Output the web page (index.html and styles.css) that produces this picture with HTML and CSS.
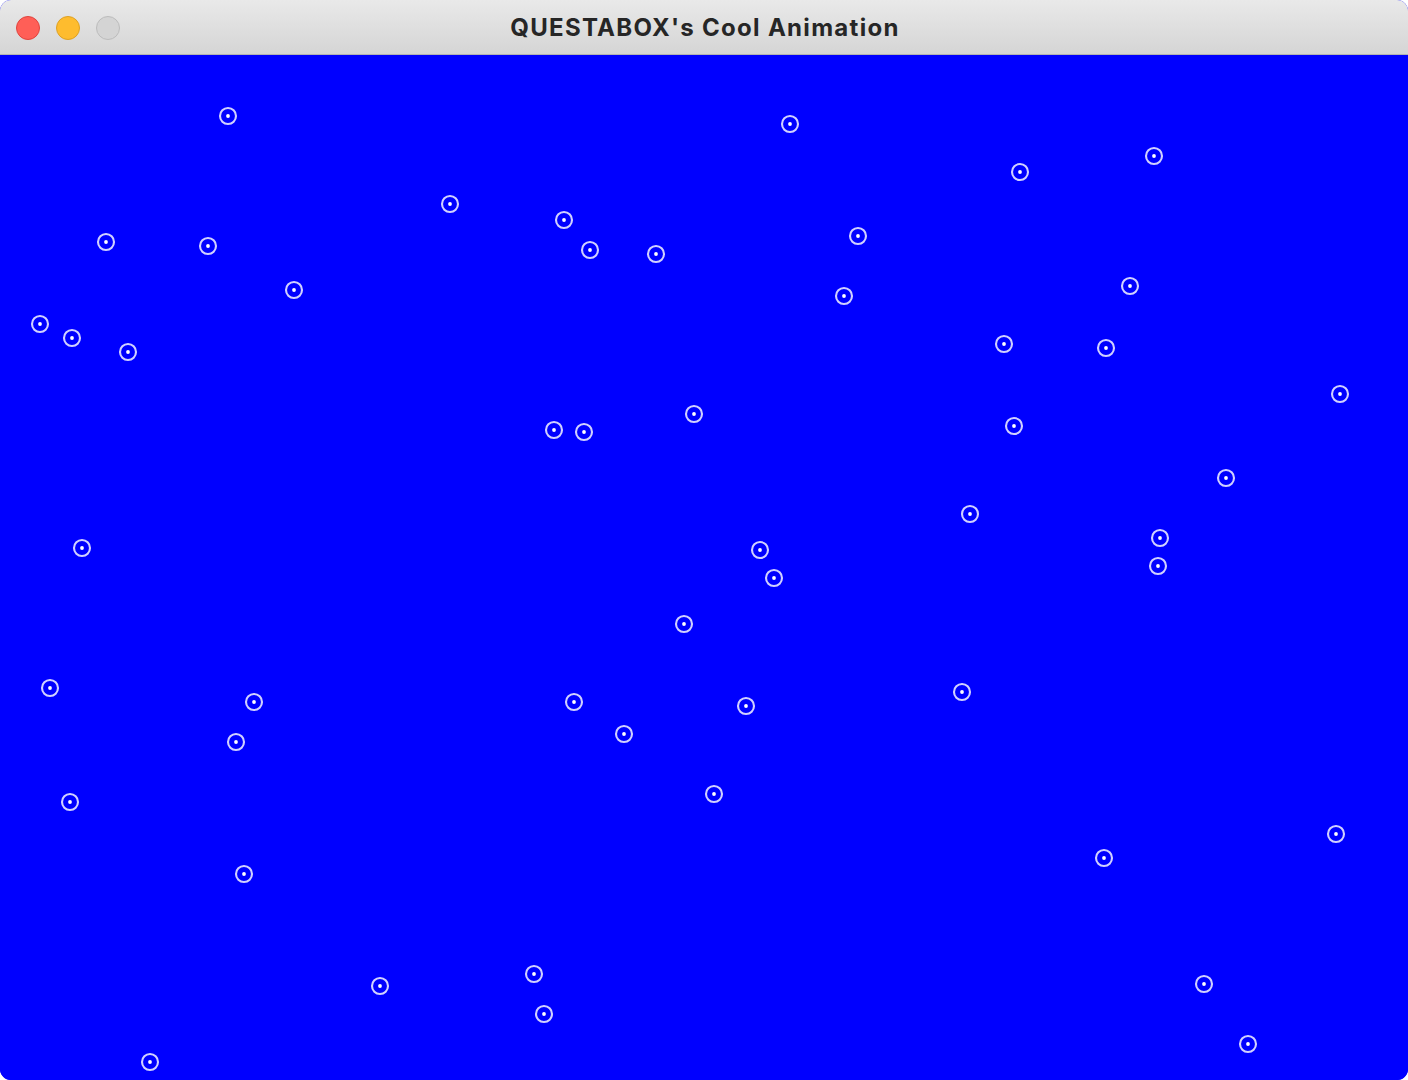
FILE: index.html
```html
<!DOCTYPE html>
<html>
<head>
<meta charset="utf-8">
<link rel="stylesheet" href="styles.css">
</head>
<body>
<div class="window">
  <div class="titlebar">
    <div class="lights">
      <span class="light red"></span>
      <span class="light yellow"></span>
      <span class="light gray"></span>
    </div>
    <div class="title">QUESTABOX's Cool Animation</div>
  </div>
  <div class="canvas">
    <svg class="scene" width="1408" height="1025" viewBox="0 55 1408 1025" xmlns="http://www.w3.org/2000/svg">
      <defs>
        <g id="dot">
          <circle r="8" fill="none" stroke="#d0d0ff" stroke-width="2.1"/>
          <circle r="1.9" fill="#ffffff"/>
        </g>
      </defs>
      <use href="#dot" x="228" y="116"/>
      <use href="#dot" x="790" y="124"/>
      <use href="#dot" x="1154" y="156"/>
      <use href="#dot" x="1020" y="172"/>
      <use href="#dot" x="450" y="204"/>
      <use href="#dot" x="564" y="220"/>
      <use href="#dot" x="106" y="242"/>
      <use href="#dot" x="208" y="246"/>
      <use href="#dot" x="590" y="250"/>
      <use href="#dot" x="656" y="254"/>
      <use href="#dot" x="858" y="236"/>
      <use href="#dot" x="294" y="290"/>
      <use href="#dot" x="1130" y="286"/>
      <use href="#dot" x="844" y="296"/>
      <use href="#dot" x="40" y="324"/>
      <use href="#dot" x="72" y="338"/>
      <use href="#dot" x="128" y="352"/>
      <use href="#dot" x="1004" y="344"/>
      <use href="#dot" x="1106" y="348"/>
      <use href="#dot" x="1340" y="394"/>
      <use href="#dot" x="694" y="414"/>
      <use href="#dot" x="554" y="430"/>
      <use href="#dot" x="584" y="432"/>
      <use href="#dot" x="1014" y="426"/>
      <use href="#dot" x="1226" y="478"/>
      <use href="#dot" x="970" y="514"/>
      <use href="#dot" x="82" y="548"/>
      <use href="#dot" x="760" y="550"/>
      <use href="#dot" x="1160" y="538"/>
      <use href="#dot" x="774" y="578"/>
      <use href="#dot" x="1158" y="566"/>
      <use href="#dot" x="684" y="624"/>
      <use href="#dot" x="50" y="688"/>
      <use href="#dot" x="254" y="702"/>
      <use href="#dot" x="574" y="702"/>
      <use href="#dot" x="746" y="706"/>
      <use href="#dot" x="962" y="692"/>
      <use href="#dot" x="236" y="742"/>
      <use href="#dot" x="624" y="734"/>
      <use href="#dot" x="70" y="802"/>
      <use href="#dot" x="714" y="794"/>
      <use href="#dot" x="1336" y="834"/>
      <use href="#dot" x="1104" y="858"/>
      <use href="#dot" x="244" y="874"/>
      <use href="#dot" x="534" y="974"/>
      <use href="#dot" x="380" y="986"/>
      <use href="#dot" x="1204" y="984"/>
      <use href="#dot" x="544" y="1014"/>
      <use href="#dot" x="1248" y="1044"/>
      <use href="#dot" x="150" y="1062"/>
    </svg>
  </div>
</div>
</body>
</html>
```

FILE: styles.css
```css
html, body {
  margin: 0;
  padding: 0;
  background: #ffffff;
}
.window {
  width: 1408px;
  height: 1080px;
  border-radius: 11px;
  overflow: hidden;
  display: flex;
  flex-direction: column;
  background: #0000ff;
}
.titlebar {
  height: 54px;
  flex: 0 0 54px;
  position: relative;
  display: flex;
  align-items: center;
  justify-content: center;
  background: linear-gradient(#e9e9e9, #d5d5d5);
  border-bottom: 1px solid #b3b3b3;
}
.lights {
  position: absolute;
  left: 16px;
  top: 16px;
  display: flex;
  gap: 16px;
}
.light {
  width: 22px;
  height: 22px;
  border-radius: 50%;
  border: 1px solid;
}
.red { background: #ff5f57; border-color: #e0443e; }
.yellow { background: #febc2e; border-color: #dea123; }
.gray { background: #d4d4d4; border-color: #bcbcbc; }
.title {
  font-family: "Inter", "Liberation Sans", sans-serif;
  font-weight: 700;
  font-size: 24px;
  letter-spacing: 1.3px;
  color: #262626;
  padding-top: 1px;
  padding-left: 2px;
}
.canvas {
  flex: 1;
  background: #0000ff;
}
.scene {
  display: block;
}
```
